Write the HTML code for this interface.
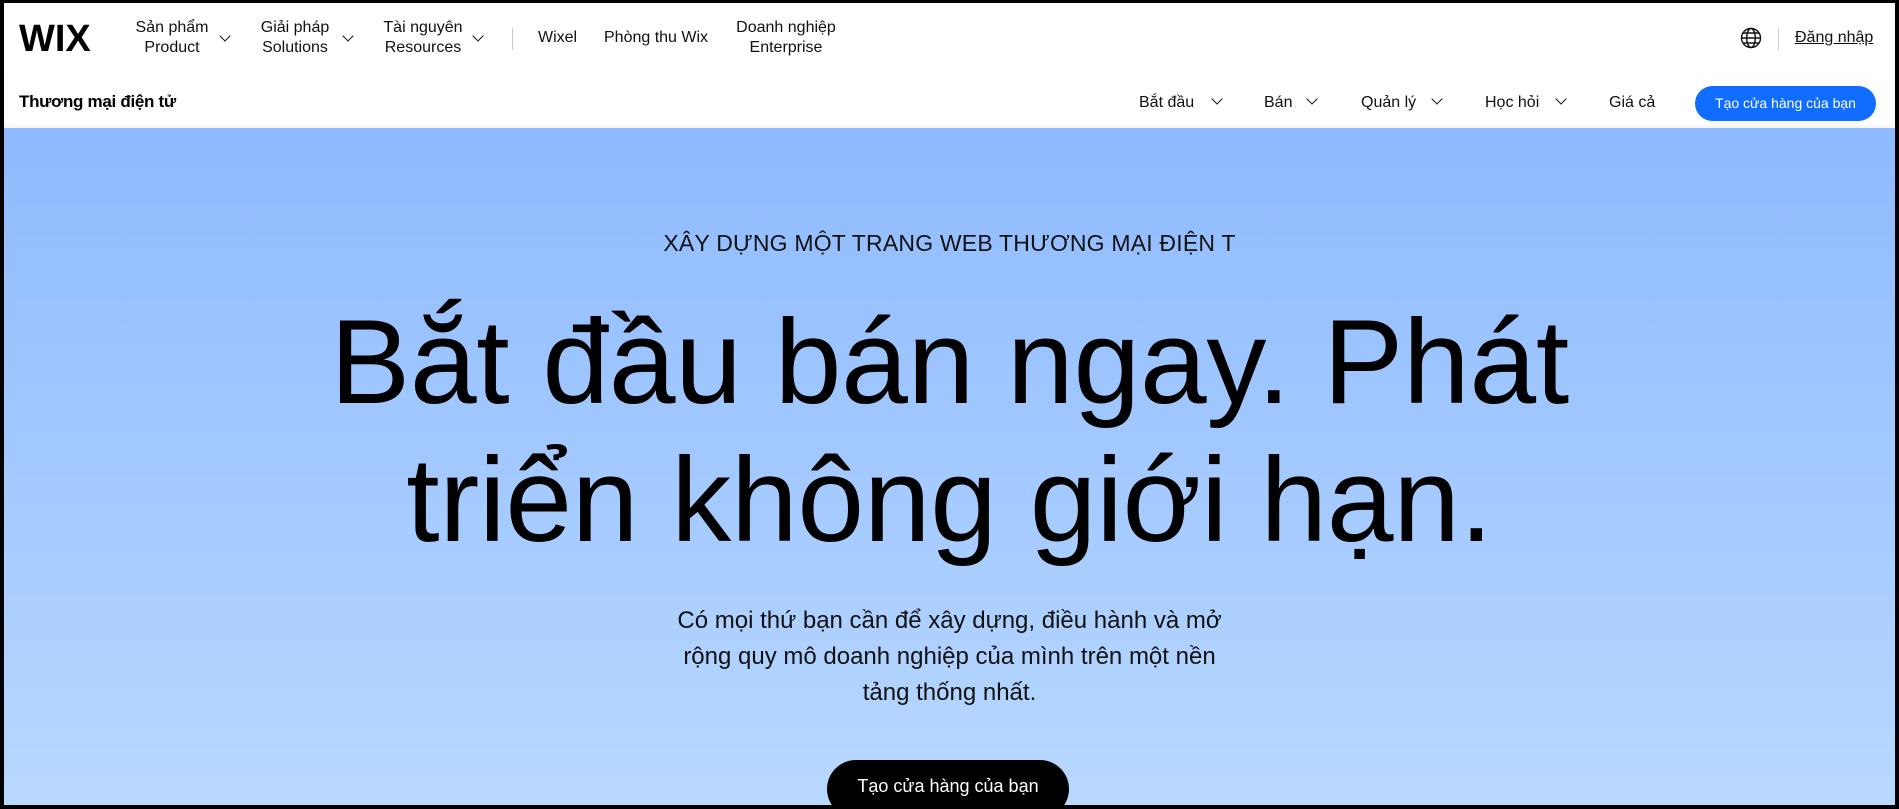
<!DOCTYPE html>
<html><head><meta charset="utf-8"><style>
*{margin:0;padding:0;box-sizing:border-box}
html,body{width:1899px;height:809px;overflow:hidden;background:#000;font-family:"Liberation Sans",sans-serif;color:#000}
#frame{position:absolute;left:4px;top:3px;width:1891px;height:802px;overflow:hidden;background:#fff}
.a{position:absolute;white-space:nowrap}
.top{position:absolute;left:0;top:0;width:100%;height:70px;background:#fff}
.sub{position:absolute;left:0;top:70px;width:100%;height:55px;background:#fff;box-shadow:0 -2px 6px rgba(0,0,0,.05) inset}
.hero{position:absolute;left:0;top:125px;width:100%;height:680px;background:linear-gradient(#8ebaff,#b8d8ff)}
.nv{font-size:16px;line-height:20px;text-align:center;color:#111}
.chev{position:absolute;width:8px;height:8px;border-right:1.6px solid #111;border-bottom:1.6px solid #111;transform:rotate(45deg)}
.c{text-align:center;width:100%;left:0}
</style></head><body><div id="frame">
<div class="top">
  <div class="a" style="left:15px;top:15px;font-size:38px;font-weight:bold;letter-spacing:0px">WIX</div>
  <div class="a nv" style="left:130px;top:15px;width:76px">Sản phẩm<br>Product</div><div class="chev" style="left:217px;top:29px"></div>
  <div class="a nv" style="left:254px;top:15px;width:74px">Giải pháp<br>Solutions</div><div class="chev" style="left:340px;top:29px"></div>
  <div class="a nv" style="left:378px;top:15px;width:82px">Tài nguyên<br>Resources</div><div class="chev" style="left:470px;top:29px"></div>
  <div class="a" style="left:508px;top:25px;width:1px;height:22px;background:#ccc"></div>
  <div class="a nv" style="left:534px;top:25px">Wixel</div>
  <div class="a nv" style="left:600px;top:25px">Phòng thu Wix</div>
  <div class="a nv" style="left:730px;top:15px;width:104px">Doanh nghiệp<br>Enterprise</div>
  <svg class="a" style="left:1736px;top:24px" width="22" height="22" viewBox="0 0 22 22" fill="none" stroke="#111" stroke-width="1.4"><circle cx="11" cy="11" r="9.5"/><ellipse cx="11" cy="11" rx="4.3" ry="9.5"/><path d="M1.5 11h19M3 6h16M3 16h16"/></svg>
  <div class="a" style="left:1774px;top:25px;width:1px;height:22px;background:#ccc"></div>
  <div class="a nv" style="left:1791px;top:25px;text-decoration:underline">Đăng nhập</div>
</div>
<div class="sub">
  <div class="a" style="left:15px;top:19px;font-size:17px;font-weight:bold;letter-spacing:-0.3px">Thương mại điện tử</div>
  <div class="a nv" style="left:1135px;top:20px">Bắt đầu</div><div class="chev" style="left:1209px;top:22px"></div>
  <div class="a nv" style="left:1260px;top:20px">Bán</div><div class="chev" style="left:1304px;top:22px"></div>
  <div class="a nv" style="left:1357px;top:20px">Quản lý</div><div class="chev" style="left:1429px;top:22px"></div>
  <div class="a nv" style="left:1481px;top:20px">Học hỏi</div><div class="chev" style="left:1553px;top:22px"></div>
  <div class="a nv" style="left:1605px;top:20px">Giá cả</div>
  <div class="a" style="left:1691px;top:13px;width:181px;height:35px;border-radius:18px;background:#116dff;color:#fff;font-size:14px;line-height:35px;text-align:center">Tạo cửa hàng của bạn</div>
</div>
<div class="hero">
  <div class="a c" style="top:102px;font-size:23px;line-height:26px;letter-spacing:0.2px;color:#111">XÂY DỰNG MỘT TRANG WEB THƯƠNG MẠI ĐIỆN T</div>
  <div class="a c" style="top:165px;font-size:120px;line-height:138px;letter-spacing:-0.3px">Bắt đầu bán ngay. Phát<br>triển không giới hạn.</div>
  <div class="a c" style="top:475px;font-size:24px;line-height:36px;color:#111">Có mọi thứ bạn cần để xây dựng, điều hành và mở<br>rộng quy mô doanh nghiệp của mình trên một nền<br>tảng thống nhất.</div>
  <div class="a" style="left:823px;top:632px;width:242px;height:58px;border-radius:29px;background:#000;color:#fff;font-size:18px;line-height:52px;text-align:center">Tạo cửa hàng của bạn</div>
</div>
</div></body></html>
